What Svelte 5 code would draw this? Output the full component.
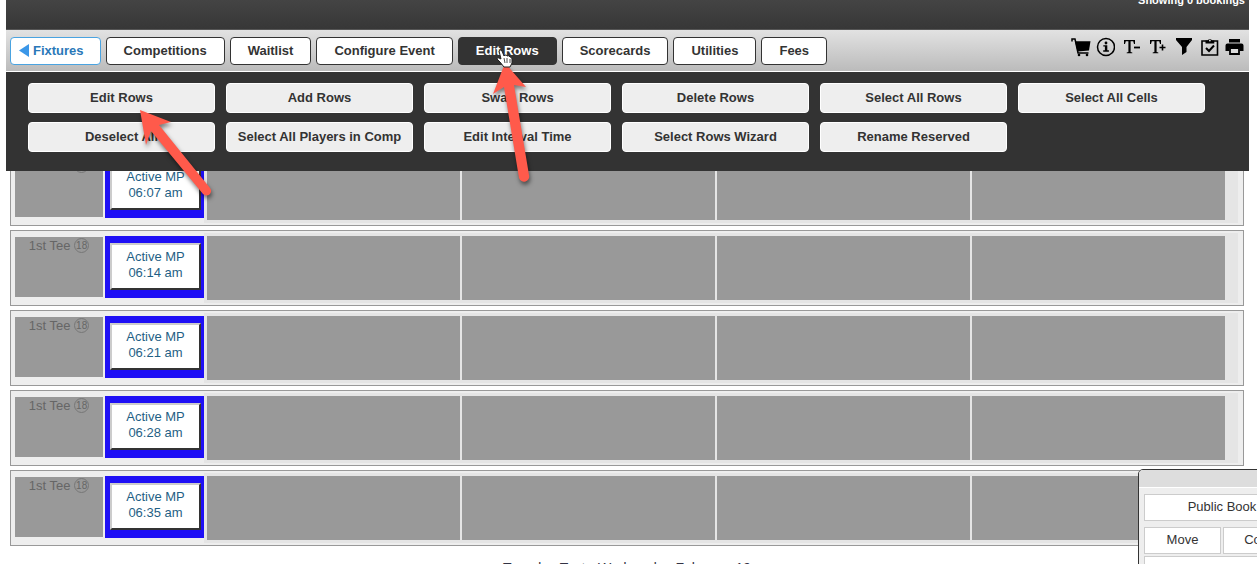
<script>
  const tabs = [
    "Competitions",
    "Waitlist",
    "Configure Event",
    "Edit Rows",
    "Scorecards",
    "Utilities",
    "Fees",
  ];

  const actions = [
    "Edit Rows",
    "Add Rows",
    "Swap Rows",
    "Delete Rows",
    "Select All Rows",
    "Select All Cells",
    "Deselect All",
    "Select All Players in Comp",
    "Edit Interval Time",
    "Select Rows Wizard",
    "Rename Reserved",
  ];

  const times = ["06:07 am", "06:14 am", "06:21 am", "06:28 am", "06:35 am"];

  let activeTab = $state("Edit Rows");
</script>

<div class="page">
  <header class="header">
    <div class="status">Showing 0 bookings</div>

    <nav class="toolbar">
      <a class="tab back" href="#fixtures">
        <svg width="10" height="14" viewBox="0 0 10 14"><path d="M10 0v13L0 6.500z" fill="#3b97e8" /></svg>
        Fixtures
      </a>
      {#each tabs as tab}
        <button class="tab" class:active={tab === activeTab} onclick={() => (activeTab = tab)}>{tab}</button>
      {/each}

      <div class="tools">
        <button class="tool" aria-label="Cart">
          <svg width="22" height="20" viewBox="0 0 22 20">
            <path d="M3 4.500V2h3l3 14h10.500" fill="none" stroke="#000" stroke-width="1.500" />
            <path d="M6 4.200h15.500L20 13.500l-11.500 1z" />
            <circle cx="10" cy="18" r="1.300" /><circle cx="18" cy="18" r="1.300" />
          </svg>
        </button>
        <button class="tool" aria-label="Information">
          <svg width="20" height="20" viewBox="0 0 20 20">
            <circle cx="11" cy="10" r="8.500" fill="none" stroke="#000" stroke-width="1.500" />
            <circle cx="11" cy="6" r="1.400" />
            <path d="M8.300 8.300h4v5h1.600v1.400H8.200v-1.400h1.700V9.600H8.300z" />
          </svg>
        </button>
        <button class="tool" aria-label="Smaller text">
          <svg width="20" height="20" viewBox="0 0 20 20">
            <path d="M3 3h11v4h-1l-.8-2.800H9.600V15l1.700.5v.8H5.700v-.8l1.700-.5V4.200H4.800L4 7H3z" />
            <path d="M13 10.500h6" stroke="#000" stroke-width="1.800" />
          </svg>
        </button>
        <button class="tool" aria-label="Larger text">
          <svg width="20" height="20" viewBox="0 0 20 20">
            <path d="M3 3h11v4h-1l-.8-2.800H9.600V15l1.700.5v.8H5.700v-.8l1.700-.5V4.200H4.800L4 7H3z" />
            <path d="M12.500 10.500h6M15.500 7.500v6" stroke="#000" stroke-width="1.600" />
          </svg>
        </button>
        <button class="tool" aria-label="Filter">
          <svg width="20" height="20" viewBox="0 0 20 20"><path d="M3 1h16v2l-5.500 7v5L9 18v-8L3 3z" /></svg>
        </button>
        <button class="tool" aria-label="Checklist">
          <svg width="20" height="20" viewBox="0 0 20 20">
            <path d="M3 4h15.500v14H3z" fill="none" stroke="#000" stroke-width="1.600" />
            <path d="M6.500 6.500V3.500h2.300a2.200 2.200 0 0 1 4.200 0h2.300v3z" />
            <circle cx="10.900" cy="3.500" r="0.900" fill="#ddd" />
            <path d="M7 11l3 3 5-5.500" fill="none" stroke="#000" stroke-width="2" />
          </svg>
        </button>
        <button class="tool" aria-label="Print">
          <svg width="20" height="20" viewBox="0 0 20 20">
            <path d="M4 2h11v3.500H4z" />
            <path d="M2.500 6.500h14q2 0 2 2v5.500h-4v-3h-10v3h-4V8.500q0-2 2-2z" />
            <path d="M5 11h9v6H5z" fill="#ddd" stroke="#000" stroke-width="1.800" />
          </svg>
        </button>
      </div>
    </nav>

    <div class="actions">
      {#each actions as action}
        <button class="action">{action}</button>
      {/each}
    </div>
  </header>

  <main class="sheet">
    {#each times as time}
      <div class="row">
        <div class="tee">1st Tee <span class="holes">18</span></div>
        <div class="slot">
          <button class="time">Active MP<br />{time}</button>
        </div>
        <div class="cells">
          <div class="cell"></div>
          <div class="cell"></div>
          <div class="cell"></div>
          <div class="cell"></div>
        </div>
      </div>
    {/each}
    <h2 class="next-title">Tuesday Test - Wednesday February 19</h2>
  </main>

  <aside class="popup">
    <div class="popup-title">Quick Actions</div>
    <div class="popup-body">
      <button class="wide">Public Book</button>
      <button>Move</button>
      <button>Comp</button>
      <button class="wide">Reserve</button>
    </div>
  </aside>

  <svg class="marks" width="640" height="220" viewBox="0 0 640 220">
    <g class="arrow">
      <path d="M140 110l31 12-12 3 51 63a4.500 4.500 0 0 1-7 6l-52-63-5 14z" />
      <path d="M505 63l21 24-12-2 15 90a5 5 0 0 1-10 3l-15-91-11 7z" />
    </g>
    <path
      class="hand"
      d="M499 51q2-2 3 0l2 5 1-1q2 0 2 1 2-1 3 1 2 0 2 2v4l-2 4h-6l-4-5-3-3q0-2 2-1l2 1z"
    />
    <path d="M504 58l1 5M507 58v5M510 59v4" stroke="#222" stroke-width="0.800" />
  </svg>
</div>

<style>
  :global(body) {
    margin: 0;
    background: #fff;
    font-family: "Liberation Sans", Arial, sans-serif;
    font-size: 13px;
    color: #333;
  }

  .page {
    position: relative;
    height: 100vh;
    overflow: hidden;
  }

  button {
    font-family: inherit;
    font-size: 13px;
    color: inherit;
    box-sizing: border-box;
    cursor: pointer;
  }

  .header {
    position: absolute;
    z-index: 1;
    top: 0;
    left: 6px;
    right: 8px;
  }

  .status {
    height: 30px;
    box-sizing: border-box;
    border-bottom: 1px solid #555;
    padding-right: 4px;
    background: linear-gradient(#444, #373737);
    color: #fff;
    font-size: 11px;
    font-weight: bold;
    line-height: 0;
    text-align: right;
  }

  .toolbar {
    display: flex;
    align-items: center;
    gap: 5px;
    height: 42px;
    box-sizing: border-box;
    padding: 0 4px;
    border-bottom: 1px solid #fff;
    background: linear-gradient(#e2e2e2, #bbb);
  }

  .tab {
    height: 28px;
    box-sizing: border-box;
    padding: 0 17px;
    border: 1px solid #333;
    border-radius: 4px;
    background: #fff;
    font-size: 13px;
    font-weight: bold;
    line-height: 24px;
    white-space: nowrap;
  }

  .tab.active {
    background: #333;
    color: #fff;
  }

  .back {
    display: flex;
    align-items: center;
    gap: 4px;
    padding: 0 16px 0 8px;
    border-color: #4aa3e0;
    color: #2a78b8;
    text-decoration: none;
  }

  .tools {
    display: flex;
    gap: 6px;
    margin-left: auto;
    padding-bottom: 8px;
  }

  .tool {
    width: 20px;
    height: 20px;
    padding: 0;
    border: 0;
    background: none;
  }

  .tool svg {
    display: block;
  }

  .actions {
    display: flex;
    flex-wrap: wrap;
    gap: 9px 11px;
    padding: 11px 22px 19px;
    background: #333;
  }

  .action {
    width: 187px;
    height: 30px;
    padding: 0 0 2px;
    border: 1px solid #fff;
    border-radius: 4px;
    background: #eee;
    font-weight: bold;
    white-space: nowrap;
  }

  .sheet {
    display: flex;
    flex-direction: column;
    gap: 4px;
    padding: 150px 13px 0 10px;
  }

  .row {
    display: flex;
    height: 76px;
    box-sizing: border-box;
    padding: 2px 5px 2px 4px;
    border: 1px solid #999;
    background: #eee;
  }

  .tee {
    width: 88px;
    height: 60px;
    margin: 4px 2px 0 0;
    background: #999;
    color: #666;
    line-height: 17px;
    text-align: center;
  }

  .holes {
    display: inline-block;
    width: 13px;
    height: 13px;
    border: 1px solid #777;
    border-radius: 50%;
    font-size: 10px;
    line-height: 13px;
    vertical-align: 1px;
  }

  .slot {
    width: 99px;
    height: 62px;
    box-sizing: border-box;
    margin-top: 3px;
    padding: 7px 3px 0 5px;
    background: #1e0ff5;
  }

  .time {
    display: block;
    width: 91px;
    height: 47px;
    padding: 0 0 4px;
    border: 2px solid;
    border-color: #ccc #333 #333 #ccc;
    background: #fff;
    color: #1f5f85;
    line-height: 16px;
  }

  .cells {
    display: flex;
    flex: 1;
    gap: 2px;
    padding: 3px 13px 3px 3px;
    background: #e5e5e5;
  }

  .cell {
    flex: 1;
    background: #999;
  }

  .next-title {
    margin: 8px 0 0;
    color: #334;
    font-size: 14px;
    font-weight: normal;
    line-height: 20px;
    text-align: center;
  }

  .popup {
    position: absolute;
    z-index: 1;
    top: 469px;
    right: -207px;
    width: 324px;
    border: 1px solid #333;
    border-radius: 5px;
    background: #eee;
  }

  .popup-title {
    height: 17px;
    border-bottom: 1px solid #fff;
    border-radius: 4px 4px 0 0;
    background: #ddd;
    font-weight: bold;
    line-height: 17px;
    text-align: center;
  }

  .popup-body {
    display: grid;
    grid-template-columns: 77px 77px;
    gap: 2px;
    padding: 6px 5px;
  }

  .popup-body button {
    height: 27px;
    padding: 0 0 3px;
    border: 1px solid #ccc;
    background: #fff;
  }

  .popup-body .wide {
    grid-column: 1 / 3;
  }

  .popup-body .wide:first-child {
    margin-bottom: 4px;
  }

  /* annotation arrows and the hand pointer lie over the whole page */
  .marks {
    position: absolute;
    z-index: 2;
    top: 0;
    left: 0;
    pointer-events: none;
  }

  .arrow {
    fill: #ff5a4b;
    filter: drop-shadow(1px 3px 2px rgba(0, 0, 0, 0.5));
  }

  .hand {
    fill: #fff;
    stroke: #222;
    stroke-width: 1;
  }
</style>
